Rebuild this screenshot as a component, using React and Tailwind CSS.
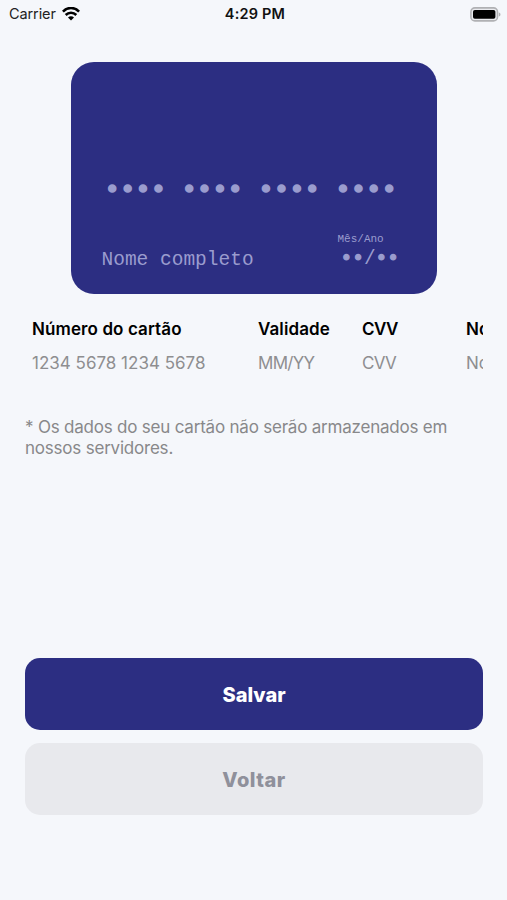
import React from 'react';

// Columns of the horizontally scrolling card form
const fields = [
    { label: 'Número do cartão', placeholder: '1234 5678 1234 5678', width: 'w-[226px]', labelStyle: 'tracking-[0.1px]', inputStyle: '' },
    { label: 'Validade', placeholder: 'MM/YY', width: 'w-[104px]', labelStyle: 'tracking-[0.1px]', inputStyle: 'tracking-[-0.7px]' },
    { label: 'CVV', placeholder: 'CVV', width: 'w-[104px]', labelStyle: 'tracking-[-0.6px]', inputStyle: 'tracking-[-0.7px]' },
    { label: 'Nome completo', placeholder: 'Nome completo', width: 'w-[226px]', labelStyle: '', inputStyle: '' },
];

function WifiIcon() {
    return (
        <svg className="ml-[6px] h-[14px] w-[18px]" viewBox="0 0 18 14" fill="none" stroke="#000" strokeWidth="2.6">
            <path d="M0.9 4.6C5.5 -0.2 12.5 -0.2 17.1 4.6" />
            <path d="M3.7 8C6.7 5 11.3 5 14.3 8" />
            <path d="M6 10.5C7.7 8.8 10.3 8.8 12 10.5L9 13.6Z" fill="#000" stroke="none" />
        </svg>
    );
}

function BatteryIcon() {
    return (
        <svg className="h-[15px] w-[31px]" viewBox="0 0 31 15">
            <rect x="0.9" y="0.9" width="26.6" height="13" rx="4" fill="#e9eaee" stroke="#b0b1b4" strokeWidth="1.6" />
            <rect x="3" y="3" width="22.4" height="8.8" rx="1.8" fill="#000" />
            <path d="M28.8 5.4C31 6 31 8.8 28.8 9.4Z" fill="#b0b1b4" />
        </svg>
    );
}

function StatusBar() {
    return (
        <header className="grid h-7 grid-cols-3 items-center pl-[9px] pr-[6px]">
            <div className="flex items-center">
                <span className="text-[14.5px] tracking-[-0.1px] text-[#222]">Carrier</span>
                <WifiIcon />
            </div>
            <span className="text-center text-[14.5px] font-semibold tracking-[0.2px] text-[#111]">4:29 PM</span>
            <div className="flex justify-end">
                <BatteryIcon />
            </div>
        </header>
    );
}

function CreditCard() {
    return (
        <section className="mx-auto mt-[34px] flex h-[232px] w-[366px] flex-col rounded-[23px] bg-[#2c2e82] pl-[31px] pr-[38px] pt-[114px] font-['Liberation_Mono',monospace] text-[#9a9cce]">
            <div className="whitespace-pre pl-[3px] text-[25.65px] leading-[30px] [-webkit-text-stroke:1.6px]">•••• •••• •••• ••••</div>
            <div className="mt-[26px] flex justify-between">
                <div className="pt-[16px] text-[19.5px] leading-6">Nome completo</div>
                <div className="w-[61px] whitespace-nowrap">
                    <div className="text-[11px] leading-[15px]">Mês/Ano</div>
                    <div className="pl-[3px] text-[19.5px] leading-6">
                        <span className="[-webkit-text-stroke:1.2px]">••</span>/<span className="[-webkit-text-stroke:1.2px]">••</span>
                    </div>
                </div>
            </div>
        </section>
    );
}

export default function App() {
    return (
        <div className="flex h-[900px] w-full flex-col overflow-hidden bg-[#f5f7fb] font-['Inter',sans-serif]">
            <StatusBar />
            <CreditCard />

            <div className="ml-[25px] mr-6 mt-6 flex overflow-hidden pl-[7px]">
                {fields.map((field) => (
                    <div key={field.label} className={`shrink-0 whitespace-nowrap ${field.width}`}>
                        <div className={`text-[17px] font-semibold leading-[22px] text-black ${field.labelStyle}`}>{field.label}</div>
                        <div className={`mt-3 text-[17px] leading-[22px] text-[#8e8e90] ${field.inputStyle}`}>{field.placeholder}</div>
                    </div>
                ))}
            </div>

            <p className="ml-[25px] mr-6 mt-[43px] text-[17px] leading-[21px] tracking-[-0.21px] text-[#88888a]">
                * Os dados do seu cartão não serão armazenados em
                <br />
                nossos servidores.
            </p>

            <div className="mb-[85px] ml-[25px] mr-6 mt-auto flex flex-col gap-[13px]">
                <button className="h-[72px] rounded-[15px] bg-[#2c2e82] pt-[2px] text-[20px] font-extrabold text-white">Salvar</button>
                <button className="h-[72px] rounded-[15px] bg-[#e8e9ed] pt-px text-[20px] font-extrabold tracking-[0.5px] text-[#8f909b]">Voltar</button>
            </div>
        </div>
    );
}
